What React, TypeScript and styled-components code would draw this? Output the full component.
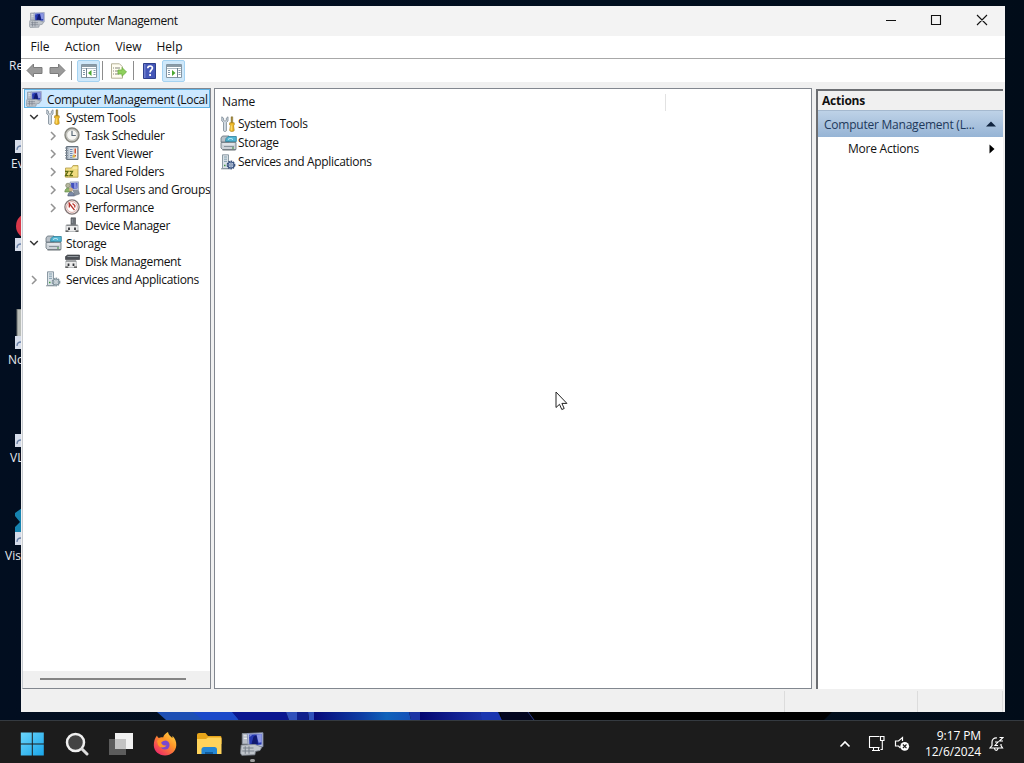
import React from 'react';
import styled, { createGlobalStyle } from 'styled-components';

const GlobalStyle = createGlobalStyle`
  * {
    box-sizing: border-box;
  }
  body {
    margin: 0;
    overflow: hidden;
    font-family: 'Open Sans', 'Noto Sans', sans-serif;
    font-size: 12px;
    color: #111;
  }
  svg {
    display: block;
    flex: none;
  }
`;

type IconProps = { size?: number };

const ComputerIcon = ({ size = 16 }: IconProps) => (
  <svg width={size} height={size} viewBox="0 0 16 16">
    <path d="M1.500 1h4.500v7H1.500z" fill="#b9bec7" stroke="#868d98" strokeWidth=".6" />
    <path d="M2.500 2.500h2.500M2.500 4.200h2.500" stroke="#e8ebef" strokeWidth=".8" />
    <path d="M4.800 1 15.300.5v9.300L5.500 10z" fill="#b4bddb" stroke="#8791b0" strokeWidth=".6" />
    <path d="M6 1.800 14.400 1.400v7L6.300 9z" fill="#2638b0" />
    <path d="M7.500 8.500 9 3l2-.8 1 5.800z" fill="#10196f" />
    <path d="m11 1.600 3.400-.2v5.500l-2 .3z" fill="#8c97e4" />
    <path d="m6.300 3.500 2-1.700-2 .1z" fill="#7986dd" />
    <path d="M.8 8.700 10 8.300l4.500 1.800-1.200 2.200-3 .6-.4 2.300-8.700.3-.8-1.300z" fill="#c0c5cb" stroke="#828993" strokeWidth=".6" />
    <path d="M2 10.700h7M1.500 12.700h8M3.500 9.500v5M6 9.500v5" stroke="#7b838e" strokeWidth=".7" />
  </svg>
);

const ToolsIcon = () => (
  <svg width="16" height="16" viewBox="0 0 16 16">
    <path d="M1.800.8v4.200l1.700 1.400v8.400c.6.900 2.300.9 2.900 0V6.400L8 5V.8L6.300 2.200v2.200l-1.300.8-1.400-.8V2.200z" fill="#d5dde5" stroke="#778591" strokeWidth=".8" />
    <path d="M11 .8h1.800v6.200H11z" fill="#a58a3c" stroke="#77652d" strokeWidth=".4" />
    <path d="M9.700 6.800h4.500v2.200l-.7.700.7 4.800c-.9 1.200-3.600 1.200-4.500 0l.7-4.800-.7-.7z" fill="#f2bd2c" stroke="#a97b0c" strokeWidth=".7" />
    <path d="M11.200 9.500v5" stroke="#ffe48a" />
  </svg>
);

const ClockIcon = () => (
  <svg width="16" height="16" viewBox="0 0 16 16">
    <circle cx="8" cy="8" r="7" fill="#c9c9c4" stroke="#85857d" strokeWidth="1.400" />
    <circle cx="8" cy="8" r="5.300" fill="#f6f6f3" stroke="#b0b0a8" strokeWidth=".6" />
    <path d="M8 3.700V8.500h3.800" fill="none" stroke="#5a6a78" strokeWidth="1.200" />
  </svg>
);

const EventIcon = () => (
  <svg width="16" height="16" viewBox="0 0 16 16">
    <path d="M2.500 1.500h11.500v13H2.500z" fill="#b4bfca" stroke="#66727e" />
    <path d="M1 3h3M1 5.500h3M1 8h3M1 10.500h3M1 13h3" stroke="#7e8994" />
    <path d="M5.500 3h3.500v10H5.500z" fill="#dfe4ea" />
    <path d="M6 4.500h2.500M6 6.500h2.500M6 8.500h2.500M6 10.500h2.500M6 12.300h2.500" stroke="#647fac" strokeWidth=".9" />
    <path d="M9.500 3h3.500v10H9.500z" fill="#f5f2f0" />
    <path d="M11.200 3.500v5M11.200 10v1.600" stroke="#cf4e30" strokeWidth="1.500" />
    <path d="m8.500 11 1.800-2 1 3.500H8.500z" fill="#d8b840" />
  </svg>
);

const SharedIcon = () => (
  <svg width="16" height="16" viewBox="0 0 16 16">
    <path d="M1.500 5h6l1.500-2.500h5v11.700h-12.500z" fill="#f1dc80" stroke="#b19a48" strokeWidth=".8" />
    <path d="M8.500 5h5" stroke="#fff3b4" strokeWidth="1.200" />
    <path d="M1 8.300h3L1.500 12.700h3M5.500 8.300h3l-2.500 4.400h3" fill="none" stroke="#5d6b13" strokeWidth="1.300" />
  </svg>
);

const UsersIcon = () => (
  <svg width="16" height="16" viewBox="0 0 16 16">
    <path d="M6 1 14.500.8v8L6.500 9z" fill="#cdd3e6" stroke="#7a84a2" strokeWidth=".6" />
    <path d="M7 1.900 13.500 1.700v5.800L7.300 8z" fill="#4250bd" />
    <path d="m10 1.900 2.200-.1.800 5.600h-3z" fill="#8890dc" />
    <path d="M9 9.500h5.500l1 3.500-4.500 1.500z" fill="#8b94a0" stroke="#626b77" strokeWidth=".5" />
    <circle cx="4" cy="4.500" r="2.300" fill="#b6b7a0" stroke="#6e7657" strokeWidth=".6" />
    <path d="M.8 11c.3-5.300 6-5.300 6.500 0z" fill="#8fb46c" stroke="#5c7f42" strokeWidth=".6" />
    <circle cx="7" cy="8.500" r="2" fill="#cfae87" />
    <path d="M3.800 15c.3-5.500 6.200-5.500 6.700 0z" fill="#7b8aa8" stroke="#49566f" strokeWidth=".6" />
  </svg>
);

const PerformanceIcon = () => (
  <svg width="16" height="16" viewBox="0 0 16 16">
    <circle cx="8" cy="8" r="7.100" fill="#fff" stroke="#837575" strokeWidth="1.300" />
    <circle cx="8" cy="8" r="5.400" fill="none" stroke="#d0928c" strokeWidth=".8" />
    <path d="M5.300 8.500V4.500l5.200 6.700M8.500 4.500l2.300 2V8.500" fill="none" stroke="#b9332d" strokeWidth="1.300" />
  </svg>
);

const DeviceIcon = () => (
  <svg width="16" height="16" viewBox="0 0 16 16">
    <path d="M7 .8h4.500v7.500H7z" fill="#6d7177" stroke="#44474b" strokeWidth=".6" />
    <path d="M7.800 2h1v4h-1z" fill="#8f959c" />
    <path d="M2 8.200h12v6.300H2z" fill="#ececec" stroke="#aaadb0" strokeWidth=".8" />
    <path d="M2.500 8.200h11" stroke="#6d7075" />
    <path d="M5 10.500v2.500M11 10.500v2.500" fill="none" stroke="#33363a" strokeWidth="1.800" />
    <path d="M1.500 14.200h3M11.500 14.200h3" stroke="#444" strokeWidth="1.300" />
  </svg>
);

const DiskIcon = () => (
  <svg width="16" height="16" viewBox="0 0 16 16">
    <path d="M1.500 3.500 3.500 2h12v4.500h-14z" fill="#4c5056" stroke="#303338" strokeWidth=".6" />
    <path d="M3.500 3.500h11" stroke="#92989e" />
    <path d="M1.800 8h10.500v6.500H1.800z" fill="#ececec" stroke="#aaadb0" strokeWidth=".8" />
    <path d="M2 8h10" stroke="#6d7075" />
    <path d="M4.500 10.500v2.500M9.500 10.500v2.500" fill="none" stroke="#33363a" strokeWidth="1.800" />
    <path d="M1.300 14.200h3M10 14.200h3" stroke="#444" strokeWidth="1.300" />
  </svg>
);

const StorageIcon = () => (
  <svg width="17" height="16" viewBox="0 0 17 16">
    <path d="M1 3 2.500 1H9v6H1z" fill="#b9c1c8" stroke="#66727c" strokeWidth=".8" />
    <path d="M6 3.500 8 1.500h8.300v5H5.500z" fill="#51b4d2" stroke="#2f7f98" strokeWidth=".8" />
    <path d="M8 4.500c1.500-1.300 3.500-1.300 5 0" fill="none" stroke="#d4f2f9" />
    <path d="M1 7.500h15v7H2.500L1 13z" fill="#ccd2d8" stroke="#68737c" strokeWidth=".8" />
    <path d="M2.500 9h12" stroke="#f4f6f8" />
    <path d="M4 11.500h10" stroke="#88939c" />
    <path d="M12 13h2" stroke="#358a37" strokeWidth="1.200" />
    <path d="M2.500 15h13" stroke="#6b7277" />
  </svg>
);

const ServicesIcon = ({ faded }: { faded?: boolean }) => (
  <svg width="16" height="16" viewBox="0 0 16 16">
    <path d="M2.500.8h6v13.700h-6z" fill="#dbe3e8" stroke="#80909b" strokeWidth=".9" />
    <path d="M4 3h3M4 5.200h3M4 7.400h3" stroke="#7c99aa" strokeWidth=".9" />
    <path d="M4 11.500h1.500" stroke="#3f983e" strokeWidth="1.300" />
    <path d="M1 14.800h9" stroke="#8c979f" />
    <circle cx="11" cy="11" r="3.600" fill={faded ? '#c9d5dc' : '#b5c5dc'} stroke={faded ? '#84959e' : '#394f78'} strokeWidth="1.600" strokeDasharray="1.600 .7" />
    <circle cx="11" cy="11" r="3" fill="none" stroke={faded ? '#84959e' : '#405a88'} />
    <circle cx="11" cy="11" r="1.200" fill={faded ? '#fff' : '#e4ebf5'} stroke={faded ? '#84959e' : '#394f78'} strokeWidth=".6" />
  </svg>
);

const ArrowIcon = ({ flip }: { flip?: boolean }) => (
  <svg width="17" height="15" viewBox="0 0 17 15">
    <path
      d="M1 7.500 7.500 1v3.500H16v6H7.500V14z"
      transform={flip ? 'translate(17 0) scale(-1 1)' : undefined}
      fill="#9a9a9a"
      stroke="#7c7c7c"
    />
  </svg>
);

const PaneIcon = ({ right }: { right?: boolean }) => (
  <svg width="16" height="14" viewBox="0 0 16 14">
    <path d="M.5.500h15v13H.500z" fill="#fff" stroke="#8596a3" />
    <path d="M1 2h14" stroke="#8b9ba6" strokeWidth="2" />
    <path d="M1 4.500h14" stroke="#b0bcc5" />
    <path d={right ? 'M11.500 4v9.500' : 'M5.500 4v9.500'} stroke="#71828f" />
    <path d={right ? 'M12.500 6.500h2M12.500 8.500h2M12.500 10.500h2M2 6.500h2M2 8.500h2M2 10.500h2' : 'M2 6.500h2M2 8.500h2M2 10.500h2M12.500 6.500h2M12.500 8.500h2M12.500 10.500h2'} stroke="#8297a8" />
    <path d={right ? 'm6 6 3.500 3L6 12z' : 'm10.500 6-3.500 3 3.500 3z'} fill="#4ba832" />
  </svg>
);

const ExportIcon = () => (
  <svg width="17" height="16" viewBox="0 0 17 16">
    <path d="M1.500.8h8l3 3v11.400h-11z" fill="#fffdf0" stroke="#b5b298" />
    <path d="M3 5h1M5 5h5M3 8h1M5 8h4M3 11h1M5 11h4" stroke="#84847c" />
    <path d="M8 7h4V4.500L16.500 9 12 13.300V11H8z" fill="#8fd05c" stroke="#6cac40" strokeWidth=".8" />
  </svg>
);

const HelpIcon = () => (
  <svg width="13" height="16" viewBox="0 0 13 16">
    <path d="M.5.500h12v15H.500z" fill="#4457b8" stroke="#2e3f8c" />
    <path d="M1 1h1.500v14H1z" fill="#7080d0" />
    <path d="M4.800 5.200c0-3 5-2.800 4.600 0C9.200 7 7.100 7 7.100 9.500M7.100 11v2" fill="none" stroke="#fff" strokeWidth="1.700" />
  </svg>
);

const ChevronIcon = ({ open }: { open?: boolean }) => (
  <svg width="10" height="11" viewBox="0 0 10 11">
    <path
      d={open ? 'M1.200 3 5 6.800 8.800 3' : 'M3 2 7 6 3 10'}
      fill="none"
      stroke={open ? '#333' : '#929292'}
      strokeWidth="1.500"
    />
  </svg>
);

type Node = {
  label: string;
  level: number;
  icon: React.ReactNode;
  state?: 'open' | 'closed';
};

const TREE: Node[] = [
  { label: 'System Tools', level: 1, icon: <ToolsIcon />, state: 'open' },
  { label: 'Task Scheduler', level: 2, icon: <ClockIcon />, state: 'closed' },
  { label: 'Event Viewer', level: 2, icon: <EventIcon />, state: 'closed' },
  { label: 'Shared Folders', level: 2, icon: <SharedIcon />, state: 'closed' },
  { label: 'Local Users and Groups', level: 2, icon: <UsersIcon />, state: 'closed' },
  { label: 'Performance', level: 2, icon: <PerformanceIcon />, state: 'closed' },
  { label: 'Device Manager', level: 2, icon: <DeviceIcon /> },
  { label: 'Storage', level: 1, icon: <StorageIcon />, state: 'open' },
  { label: 'Disk Management', level: 2, icon: <DiskIcon /> },
  { label: 'Services and Applications', level: 1, icon: <ServicesIcon faded />, state: 'closed' },
];

const SHORTCUTS = [
  { label: 'Re', indent: 9 },
  { label: 'Ev', indent: 11, badge: true },
  { label: '', indent: 0, badge: true, art: 'red' },
  { label: 'No', indent: 8, badge: true, art: 'notepad' },
  { label: 'VL', indent: 10, badge: true },
  { label: 'Vis', indent: 5, badge: true, art: 'code' },
];

const ShortcutArt = ({ art }: { art?: string }) => (
  <svg width="7" height="40" viewBox="0 0 7 40">
    {art === 'red' && <circle cx="15" cy="15" r="13" fill="#d8384a" />}
    {art === 'notepad' && <path d="M3 0h5v33H3z" fill="#b9bdb8" stroke="#6d716f" />}
    {art === 'code' && <path d="M8 3 1 8v3l5 6-5 5v5l7 4z" fill="#1683b0" />}
    <path d="M1 27h6v13H1z" fill="#d5dcea" />
    <path d="M3 37c0-2 1-4 4-4" fill="none" stroke="#6a82a8" strokeWidth="1.300" />
  </svg>
);

const App = () => {
  return (
    <Desktop>
      <GlobalStyle />
      <Wallpaper>
        <svg width="1024" height="8" viewBox="0 0 1024 8">
          <defs>
            <linearGradient id="glow">
              <stop offset="0" stopColor="#08097a" />
              <stop offset=".5" stopColor="#0d3ea4" />
              <stop offset=".75" stopColor="#0e62ba" />
              <stop offset="1" stopColor="#1550b8" />
            </linearGradient>
            <linearGradient id="edge">
              <stop offset="0" stopColor="#040670" />
              <stop offset="1" stopColor="#1a32a8" />
            </linearGradient>
          </defs>
          <path d="M500 0h332l-8 8H500z" fill="#000" />
          <path d="M157 0h40l10 8h-41z" fill="#1d4fb4" />
          <path d="M193 0h40l6 8h-36z" fill="#1b49c9" />
          <path d="M232 0h54l3 8h-50z" fill="#0a1690" />
          <path d="M286 0h11v8h-8zM308 0h6v8h-5z" fill="#3050bb" />
          <path d="M297 0h11l1 8h-12z" fill="#10208c" />
          <path d="M314 0h95l2 8h-97z" fill="url(#glow)" />
          <path d="M409 0h11v8h-9z" fill="#1c34a4" />
          <path d="M420 0h60l3 8h-63z" fill="url(#edge)" />
          <path d="M480 0h18l4 8h-20z" fill="#1a36b0" />
          <path d="M500 0h28l6 8h-32z" fill="#02051f" />
          <path d="m528 0 6 8" stroke="#2a3a80" />
        </svg>
      </Wallpaper>
      <Shortcuts>
        {SHORTCUTS.map(({ label, indent, badge, art }, i) => (
          <Shortcut key={i} $first={i === 0}>
            {badge && <ShortcutArt art={art} />}
            <ShortcutLabel $indent={indent}>{label}</ShortcutLabel>
          </Shortcut>
        ))}
      </Shortcuts>
      <Window>
        <TitleBar>
          <ComputerIcon />
          <Title>Computer Management</Title>
          <svg width="102" height="12" viewBox="0 0 102 12">
            <path d="M0 6.500h10M45.500 1.500h9v9h-9zM91 1l10 10M101 1 91 11" fill="none" stroke="#111" strokeWidth="1.100" />
          </svg>
        </TitleBar>
        <MenuBar>
          <MenuItem $width={34}>File</MenuItem>
          <MenuItem $width={51}>Action</MenuItem>
          <MenuItem $width={41}>View</MenuItem>
          <MenuItem $width={41}>Help</MenuItem>
        </MenuBar>
        <ToolBar>
          <ArrowIcon />
          <ToolGap $width={6} />
          <ArrowIcon flip />
          <ToolGap $width={5} />
          <ToolDivider />
          <ToolGap $width={5} />
          <ToolButton>
            <PaneIcon />
          </ToolButton>
          <ToolGap $width={2} />
          <ToolDivider />
          <ToolGap $width={7} />
          <ExportIcon />
          <ToolGap $width={6} />
          <ToolDivider />
          <ToolGap $width={9} />
          <HelpIcon />
          <ToolGap $width={6} />
          <ToolButton>
            <PaneIcon right />
          </ToolButton>
        </ToolBar>
        <Panes>
          <TreePane>
            <RootRow>
              <ComputerIcon />
              <span>Computer Management (Local</span>
            </RootRow>
            {TREE.map(({ label, level, icon, state }) => (
              <TreeRow key={label} $level={level}>
                <Toggle>{state && <ChevronIcon open={state === 'open'} />}</Toggle>
                <TreeIcon>{icon}</TreeIcon>
                <span>{label}</span>
              </TreeRow>
            ))}
            <ScrollTrack>
              <ScrollThumb />
            </ScrollTrack>
          </TreePane>
          <ListPane>
            <ListHeader>Name</ListHeader>
            <ListRow>
              <ListIcon><ToolsIcon /></ListIcon>
              System Tools
            </ListRow>
            <ListRow>
              <ListIcon><StorageIcon /></ListIcon>
              Storage
            </ListRow>
            <ListRow>
              <ListIcon><ServicesIcon /></ListIcon>
              Services and Applications
            </ListRow>
          </ListPane>
          <ActionsPane>
            <ActionsTitle>Actions</ActionsTitle>
            <ActionsGroup>
              Computer Management (L...
              <svg width="10" height="6" viewBox="0 0 10 6">
                <path d="M0 5.500 5 .5l5 5z" fill="#10243f" />
              </svg>
            </ActionsGroup>
            <ActionRow>
              More Actions
              <svg width="6" height="10" viewBox="0 0 6 10">
                <path d="M.5.500 5.500 5l-5 4.500z" fill="#000" />
              </svg>
            </ActionRow>
          </ActionsPane>
        </Panes>
        <StatusBar>
          <StatusCell />
          <StatusCell $width={133} />
          <StatusCell $width={85} />
        </StatusBar>
      </Window>
      <Taskbar>
        <Apps>
          <svg width="25" height="24" viewBox="0 0 25 24">
            <defs>
              <linearGradient id="win" x2="1" y2="1">
                <stop offset="0" stopColor="#6bd5fa" />
                <stop offset="1" stopColor="#19a5ea" />
              </linearGradient>
            </defs>
            <path d="M.8.500h11v11H.8zM12.800.500h11v11h-11zM.8 12.500h11v11H.8zM12.800 12.500h11v11h-11z" fill="url(#win)" />
          </svg>
          <svg width="24" height="24" viewBox="0 0 24 24">
            <circle cx="10.500" cy="10.500" r="8.500" fill="#444" stroke="#f0f0f0" strokeWidth="2.500" />
            <path d="m17 17 5 5" stroke="#ddd" strokeWidth="3" strokeLinecap="round" />
          </svg>
          <svg width="24" height="24" viewBox="0 0 24 24">
            <path d="M0 7h17v16H0z" fill="#5c5c5c" />
            <path d="M6 1h18v16H6z" fill="#f1f1f1" />
            <path d="M6 7h11v10H6z" fill="#c3c3c3" />
          </svg>
          <svg width="24" height="24" viewBox="0 0 24 24">
            <defs>
              <linearGradient id="fox" x1="1" x2=".2" y2="1">
                <stop offset="0" stopColor="#ffe34a" />
                <stop offset=".45" stopColor="#ff9428" />
                <stop offset="1" stopColor="#ee246c" />
              </linearGradient>
            </defs>
            <path d="M4 3.500c.3 1.200.9 2 1.900 2.400 1.300-.6 2.800-.8 4.200-.4.6-2.300 2.600-4.500 4.900-5.500.3 3 2.800 4.200 4.300 6 .3-.7.300-1.600.1-2.300 2.500 2.600 4.100 5.800 3.900 9.600C22.900 19.400 18 23.500 12 23.500S1 19.300.8 13.500C.7 9.500 2 5.800 4 3.500z" fill="url(#fox)" />
            <circle cx="12" cy="13" r="4.600" fill="#7a48d0" />
            <path d="M4 9c3-3.200 6-2.600 8-.4-2 .3-2.700 1.300-3.800 1.500 0 2.500 2.500 4 5.300 3.200-1.300 2.800-6.500 3.200-8.500-.3z" fill="#ff9628" />
          </svg>
          <FilesApp>
            <svg width="26" height="24" viewBox="0 0 26 24">
              <path d="M1 3c0-1.200.8-2 2-2h6.500L12 4h12c1 0 1.500.5 1.500 1.500V12H1z" fill="#e7a51a" />
              <path d="M1 7h9l2-1.500h12c1 0 1.500.5 1.500 1.500v15H1z" fill="#ffd35b" />
              <path d="M5.500 22v-4.500c0-1.500 1-2.500 2.500-2.500h10.500c1.500 0 2.500 1 2.500 2.500V22z" fill="#2486d4" />
              <path d="M9 22v-2h8v2z" fill="#125c9c" />
            </svg>
          </FilesApp>
          <RunningApp>
            <ComputerIcon size={24} />
          </RunningApp>
        </Apps>
        <Tray>
          <svg width="12" height="8" viewBox="0 0 12 8">
            <path d="m1.500 6.500 4.500-4.500 4.500 4.500" fill="none" stroke="#fff" strokeWidth="1.600" />
          </svg>
          <svg width="17" height="17" viewBox="0 0 17 17">
            <path d="M11.500 1.500h-10v11h10M4 15.500h8M5.500 12.500v3M10.500 12.500v3M12.500 1.500h3.500v4h-3.500zM14.300 5.500v9h-1.800" fill="none" stroke="#fff" strokeWidth="1.100" />
          </svg>
          <svg width="16" height="16" viewBox="0 0 16 16">
            <path d="M8.500 5V1.500L4.500 5H1.500v5h3l2 2" fill="none" stroke="#fff" strokeWidth="1.200" />
            <circle cx="10.700" cy="10.300" r="4.400" fill="#fff" />
            <path d="m8.900 8.500 3.600 3.600M12.500 8.500l-3.600 3.600" stroke="#1c1c1c" strokeWidth="1.200" />
          </svg>
          <DateTime>
            <span>9:17 PM</span>
            <span>12/6/2024</span>
          </DateTime>
          <svg width="15" height="16" viewBox="0 0 15 16">
            <path d="M8 2C5 1.500 3 3.500 3 6v3.500L1 12h12.500l-1.500-2.500V8M5.500 12.500c.5 2.500 3 2.500 3.500 0" fill="none" stroke="#fff" strokeWidth="1.200" />
            <path d="M6 6h3L6 9.500h3M10.500 1.500H14L10.500 5H14" fill="none" stroke="#fff" strokeWidth="1.100" />
          </svg>
        </Tray>
      </Taskbar>
      <Cursor>
        <svg width="13" height="20" viewBox="0 0 13 20">
          <path d="M1 1v15.500l3.500-3.200 2.300 5.200 2.400-1-2.300-5.100h5z" fill="#fff" stroke="#222" />
        </svg>
      </Cursor>
    </Desktop>
  );
};

const Desktop = styled.div`
  position: relative;
  width: 1024px;
  height: 763px;
  display: flex;
  flex-direction: column;
  justify-content: flex-end;
  overflow: hidden;
  background: linear-gradient(90deg, #020e20, #010f1f 60%, #010c19);
`;

const Wallpaper = styled.div`
  height: 8px;
`;

const Shortcuts = styled.div`
  position: absolute;
  top: 0;
  left: 0;
  width: 21px;
  overflow: hidden;
`;

const Shortcut = styled.div<{ $first: boolean }>`
  height: ${({ $first }) => ($first ? 74 : 98)}px;
  display: flex;
  flex-direction: column;
  align-items: flex-end;
  justify-content: flex-end;
  gap: 3px;
`;

const ShortcutLabel = styled.span<{ $indent: number }>`
  width: 21px;
  height: 16px;
  padding-left: ${({ $indent }) => $indent}px;
  line-height: 16px;
  white-space: nowrap;
  color: #e4e8ee;
`;

const Window = styled.div`
  position: absolute;
  top: 6px;
  left: 21px;
  width: 984px;
  height: 706px;
  display: flex;
  flex-direction: column;
  background: #f0f0f0;
`;

const TitleBar = styled.div`
  height: 30px;
  display: flex;
  align-items: center;
  padding: 0 17px 2px 8px;
  background: #f3f3f3;
`;

const Title = styled.span`
  flex: 1;
  margin-left: 6px;
  letter-spacing: -0.38px;
`;

const MenuBar = styled.div`
  height: 23px;
  display: flex;
  align-items: center;
  padding: 0 0 1px 2px;
  border-bottom: 1px solid #a8a8a8;
  background: #fff;
`;

const MenuItem = styled.span<{ $width: number }>`
  width: ${({ $width }) => $width}px;
  text-align: center;
`;

const ToolBar = styled.div`
  height: 23px;
  display: flex;
  align-items: center;
  padding-left: 5px;
  background: #fff;
`;

const ToolGap = styled.div<{ $width: number }>`
  width: ${({ $width }) => $width}px;
`;

const ToolDivider = styled.div`
  width: 1px;
  height: 19px;
  background: #8c8c8c;
`;

const ToolButton = styled.div`
  width: 23px;
  height: 22px;
  display: flex;
  align-items: center;
  justify-content: center;
  border: 1px solid #a5d3f2;
  border-radius: 2px;
  background: #cfe8fa;
`;

const Panes = styled.div`
  height: 607px;
  display: flex;
  padding: 6px 2px 0 1px;
`;

const TreePane = styled.div`
  width: 189px;
  height: 601px;
  display: flex;
  flex-direction: column;
  padding: 0 0 0 1px;
  margin-right: 3px;
  overflow: hidden;
  border: 1px solid #82878f;
  border-left-color: #c8ccd1;
  background: #fff;
  white-space: nowrap;
  letter-spacing: -0.34px;
`;

const RootRow = styled.div`
  flex: none;
  height: 19px;
  display: flex;
  align-items: center;
  gap: 5px;
  padding: 1px 0 0 1px;
  border: 1px solid #5fb2e4;
  background: #cce8ff;
`;

const TreeRow = styled.div<{ $level: number }>`
  flex: none;
  height: 18px;
  display: flex;
  align-items: center;
  padding-left: ${({ $level }) => ($level - 1) * 19 + 5}px;
`;

const Toggle = styled.div`
  flex: none;
  width: 10px;
  height: 10px;
  margin-right: 6px;
`;

const TreeIcon = styled.div`
  flex: none;
  width: 21px;
  display: flex;
`;

const ScrollTrack = styled.div`
  height: 17px;
  margin: auto 0 0 -1px;
  padding: 7px 0 0 17px;
  background: #f0f0f0;
`;

const ScrollThumb = styled.div`
  width: 146px;
  height: 2px;
  background: #858585;
`;

const ListPane = styled.div`
  width: 598px;
  height: 601px;
  margin-right: 4px;
  padding: 5px 0 0 5px;
  flex: none;
  border: 1px solid #82878f;
  background: #fff;
  letter-spacing: -0.31px;
`;

const ListHeader = styled.div`
  width: 446px;
  height: 17px;
  margin-bottom: 3px;
  padding-left: 2px;
  border-right: 1px solid #e2e2e2;
  line-height: 16px;
  letter-spacing: -0.1px;
`;

const ListRow = styled.div`
  height: 19px;
  display: flex;
  align-items: center;
`;

const ListIcon = styled.div`
  width: 18px;
`;

const ActionsPane = styled.div`
  flex: 1;
  height: 600px;
  margin-top: 1px;
  border-top: 2px solid #6c6e72;
  border-left: 2px solid #6c6e72;
  background: #fff;
  letter-spacing: -0.23px;
`;

const ActionsTitle = styled.div`
  height: 20px;
  padding-left: 4px;
  border-bottom: 1px solid #a5b9cf;
  background: #f0f0f0;
  font-weight: 700;
  line-height: 20px;
`;

const ActionsGroup = styled.div`
  height: 26px;
  display: flex;
  align-items: center;
  justify-content: space-between;
  padding: 0 7px 0 6px;
  background: linear-gradient(#bed2e7, #96b4d5);
  color: #1e395b;
`;

const ActionRow = styled.div`
  height: 23px;
  display: flex;
  align-items: center;
  justify-content: space-between;
  padding: 0 8px 0 30px;
`;

const StatusBar = styled.div`
  height: 23px;
  display: flex;
  padding: 2px 2px 0 0;
`;

const StatusCell = styled.div<{ $width?: number }>`
  ${({ $width }) => ($width ? `width: ${$width}px;` : 'flex: 1;')}
  border-right: 1px solid #dcdcdc;
`;

const Taskbar = styled.div`
  height: 43px;
  display: flex;
  justify-content: space-between;
  border-top: 1px solid #343a40;
  background: #1c1c1c;
`;

const Apps = styled.div`
  display: flex;
  align-items: center;
  gap: 20px;
  padding: 4px 0 0 20px;
`;

const FilesApp = styled.div`
  margin-left: -1px;
`;

const RunningApp = styled.div`
  position: relative;
  margin-left: -2px;

  &::after {
    content: '';
    position: absolute;
    left: 10px;
    bottom: -6px;
    width: 5px;
    height: 3px;
    border-radius: 2px;
    background: #9a9a9a;
  }
`;

const Tray = styled.div`
  display: flex;
  align-items: center;
  padding: 3px 20px 0 0;
  color: #fff;

  svg:nth-of-type(2) {
    margin: 0 9px 0 17px;
  }
`;

const DateTime = styled.div`
  width: 71px;
  margin-right: 8px;
  display: flex;
  flex-direction: column;
  align-items: flex-end;
  line-height: 16px;
  letter-spacing: -0.1px;
`;

const Cursor = styled.div`
  position: absolute;
  top: 391px;
  left: 555px;
`;

export default App;
